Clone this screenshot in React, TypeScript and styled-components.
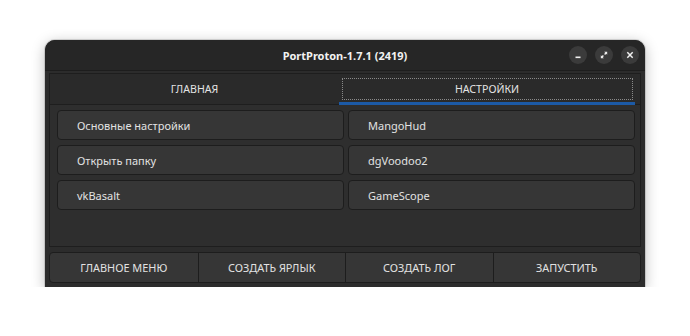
import styled, { createGlobalStyle } from 'styled-components';

const GlobalStyle = createGlobalStyle`
    *, *::before, *::after {
        box-sizing: border-box;
    }
    html, body {
        margin: 0;
        background: #ffffff;
        font-family: "Noto Sans", "Open Sans", sans-serif;
    }
`

const Page = styled.div`
    padding: 40px 0 0 45px;
`

const Window = styled.div`
    width: 600px;
    height: 247px;
    background: #2c2c2c;
    border-radius: 10px 10px 0 0;
    box-shadow: 0 3px 14px rgba(0, 0, 0, 0.28), 0 0 0 1px rgba(0, 0, 0, 0.12);
    display: flex;
    flex-direction: column;
    overflow: hidden;
`

const TitleBar = styled.div`
    height: 31px;
    flex-shrink: 0;
    background: #262626;
    border-bottom: 1px solid #1d1d1d;
    display: flex;
    align-items: center;
    justify-content: center;
    position: relative;
`

const Title = styled.span`
    color: #f2f2f2;
    font-size: 11px;
    font-weight: 700;
`

const Controls = styled.div`
    position: absolute;
    right: 6px;
    top: 6px;
    display: flex;
    gap: 8px;
`

const CtrlButton = styled.div`
    width: 18px;
    height: 18px;
    border-radius: 50%;
    background: #3b3b3b;
    display: flex;
    align-items: center;
    justify-content: center;
`

const Body = styled.div`
    flex: 1;
    padding: 2px 4px 4px 4px;
    display: flex;
    flex-direction: column;
    gap: 5px;
`

const TabWidget = styled.div`
    height: 174px;
    flex-shrink: 0;
    border: 1px solid #1e1e1e;
    background: #2e2e2e;
    display: flex;
    flex-direction: column;
`

const TabBar = styled.div`
    height: 31px;
    display: grid;
    grid-template-columns: 289px 296px;
    border-bottom: 1px solid #1e1e1e;
    background: #2a2a2a;
`

const Tab = styled.div<{ $active?: boolean }>`
    position: relative;
    display: flex;
    align-items: center;
    justify-content: center;
    padding-bottom: 1px;
    color: #e4e4e4;
    font-size: 10.6px;
    &::before {
        content: '';
        display: ${p => (p.$active ? 'block' : 'none')};
        position: absolute;
        left: 3px;
        right: 2px;
        top: 4px;
        bottom: 4px;
        border: 1px dotted #8a8a8a;
    }
    &::after {
        content: '';
        display: ${p => (p.$active ? 'block' : 'none')};
        position: absolute;
        left: 0;
        right: 0;
        bottom: -1px;
        height: 3px;
        background: #1c5aa6;
    }
`

const Pane = styled.div`
    padding: 5px 5px 0 7px;
    display: grid;
    grid-template-columns: 1fr 1fr;
    grid-auto-rows: 30px;
    column-gap: 4px;
    row-gap: 5px;
`

const OptionButton = styled.div`
    background: #363636;
    border: 1px solid #1d1d1d;
    border-radius: 4px;
    display: flex;
    align-items: center;
    padding-left: 19px;
    color: #e2e2e2;
    font-size: 11px;
`

const BottomBar = styled.div`
    height: 31px;
    flex-shrink: 0;
    display: grid;
    grid-template-columns: repeat(4, 1fr);
    border: 1px solid #1d1d1d;
    border-radius: 4px;
    overflow: hidden;
    background: #363636;
`

const BarButton = styled.div`
    display: flex;
    align-items: center;
    justify-content: center;
    color: #e2e2e2;
    font-size: 10.9px;
    border-left: 1px solid #1d1d1d;
    &:first-child {
        border-left: none;
    }
`

const options = ['Основные настройки', 'MangoHud', 'Открыть папку', 'dgVoodoo2', 'vkBasalt', 'GameScope'];
const actions = ['ГЛАВНОЕ МЕНЮ', 'СОЗДАТЬ ЯРЛЫК', 'СОЗДАТЬ ЛОГ', 'ЗАПУСТИТЬ'];

const App = () => {
    return (
        <>
            <GlobalStyle />
            <Page>
                <Window>
                    <TitleBar>
                        <Title>PortProton-1.7.1 (2419)</Title>
                        <Controls>
                            <CtrlButton>
                                <svg width="8" height="8" viewBox="0 0 8 8">
                                    <rect x="1.5" y="5.5" width="5" height="1.6" fill="#f0f0f0" />
                                </svg>
                            </CtrlButton>
                            <CtrlButton>
                                <svg width="8" height="8" viewBox="0 0 8 8" fill="#f0f0f0">
                                    <path d="M4.2 0.8 H7.2 V3.8 Z" />
                                    <path d="M3.8 7.2 H0.8 V4.2 Z" />
                                    <path d="M6 2 L4.6 3.4" stroke="#f0f0f0" strokeWidth="1.4" />
                                    <path d="M2 6 L3.4 4.6" stroke="#f0f0f0" strokeWidth="1.4" />
                                </svg>
                            </CtrlButton>
                            <CtrlButton>
                                <svg width="8" height="8" viewBox="0 0 8 8">
                                    <path d="M1.3 1.3 L6.7 6.7 M6.7 1.3 L1.3 6.7" stroke="#f0f0f0" strokeWidth="1.5" />
                                </svg>
                            </CtrlButton>
                        </Controls>
                    </TitleBar>
                    <Body>
                        <TabWidget>
                            <TabBar>
                                <Tab>ГЛАВНАЯ</Tab>
                                <Tab $active>НАСТРОЙКИ</Tab>
                            </TabBar>
                            <Pane>
                                {options.map(o => (
                                    <OptionButton key={o}>{o}</OptionButton>
                                ))}
                            </Pane>
                        </TabWidget>
                        <BottomBar>
                            {actions.map(a => (
                                <BarButton key={a}>{a}</BarButton>
                            ))}
                        </BottomBar>
                    </Body>
                </Window>
            </Page>
        </>
    );
}

export default App;
